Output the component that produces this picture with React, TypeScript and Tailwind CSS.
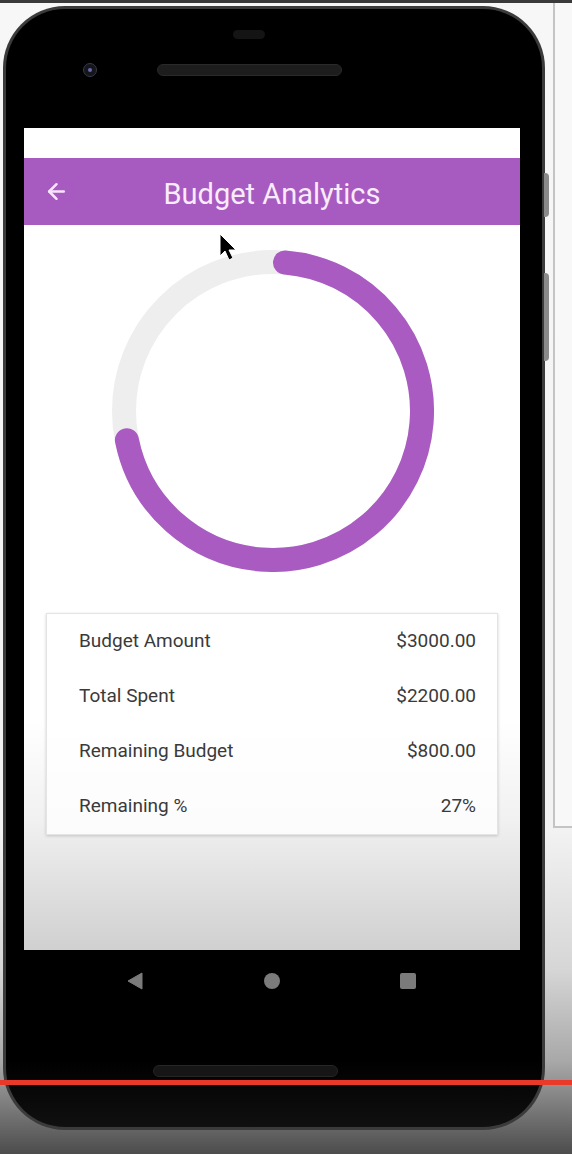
import { ArrowLeft } from "lucide-react";

const rows = [
  ["Budget Amount", "$3000.00"],
  ["Total Spent", "$2200.00"],
  ["Remaining Budget", "$800.00"],
  ["Remaining %", "27%"],
];

function Ring({ start, sweep }: { start: number; sweep: number }) {
  const r = 149; const c = 2 * Math.PI * r;
  return (
    <svg width="322" height="322" viewBox="0 0 322 322" className="block">
      <circle cx="161" cy="161" r={r} fill="none" stroke="#eeeeee" strokeWidth="24" />
      <circle cx="161" cy="161" r={r} fill="none" stroke="#a95bc1" strokeWidth="24" strokeLinecap="round"
        strokeDasharray={`${(c * sweep) / 360} ${c}`} transform={`rotate(${start - 90} 161 161)`} />
    </svg>
  );
}

export default function App() {
  return (
    <div className="relative w-[572px] h-[1154px] overflow-hidden bg-[linear-gradient(to_bottom,#f7f7f7_0%,#f2f2f2_72%,#d6d6d6_84%,#a8a8a8_92%,#4c4c4c_100%)] font-['Roboto',sans-serif]">
      <div className="h-[3px] bg-[#3a3a3a]" />
      <div className="flex">
        {/* phone */}
        <div className="relative ml-[3px] mt-[3px] w-[542px] h-[1124px] rounded-[62px] bg-[#3b3b3b] p-[3px]">
          <div className="w-full h-full rounded-[59px] bg-[linear-gradient(to_bottom,#000_0%,#000_94%,#101010_100%)] overflow-hidden">
            {/* top bezel */}
            <div className="h-[119px]">
              <div className="pt-[21px] pl-[227px]"><div className="w-[32px] h-[9px] rounded-full bg-[#141414]" /></div>
              <div className="mt-[24px] flex items-center">
                <div className="ml-[77px] w-[14px] h-[14px] rounded-full bg-[#15151d] border border-[#3a3a44] flex items-center justify-center">
                  <div className="w-[4px] h-[4px] rounded-full bg-[#6a6aa8]" />
                </div>
                <div className="ml-[60px] w-[185px] h-[12px] rounded-full bg-[#1d1d1d] border border-[#2a2a2a]" />
              </div>
            </div>
            {/* screen */}
            <div className="ml-[18px] w-[496px] h-[822px] flex flex-col bg-[linear-gradient(to_bottom,#ffffff_0%,#ffffff_72%,#f1f1f1_84%,#d0d0d0_100%)]">
              <div className="h-[30px]" />
              <div className="relative h-[67px] bg-[#a75bc0] flex items-center justify-center">
                <ArrowLeft className="absolute left-[20px] top-[21px] text-[#f7e6fa]" size={25} strokeWidth={2.4} />
                <span className="mt-[6px] text-[29px] text-[#f9ebfb]">Budget Analytics</span>
              </div>
              <div className="mt-[25px] flex justify-center pl-[2px]"><Ring start={4.6} sweep={254} /></div>
              <div className="mt-[41px] mx-[22px] bg-white/80 border border-[#e4e4e4] shadow-[0_1px_3px_rgba(0,0,0,0.18)]">
                {rows.map(([k, v]) => (
                  <div key={k} className="h-[55px] flex items-center justify-between pl-[32px] pr-[21px] text-[19px] text-[#3a3a3a]">
                    <span>{k}</span><span>{v}</span>
                  </div>
                ))}
              </div>
            </div>
            {/* nav bar */}
            <div className="pt-[22px] flex items-center">
              <svg width="16" height="18" viewBox="0 0 16 18" className="ml-[121px]"><path d="M15 1v16L1 9z" fill="#7b7b7b" stroke="#7b7b7b" strokeLinejoin="round" /></svg>
              <div className="ml-[121px] w-[16px] h-[16px] rounded-full bg-[#7b7b7b]" />
              <div className="ml-[120px] w-[16px] h-[16px] rounded-[2px] bg-[#7b7b7b]" />
            </div>
            <div className="mt-[75px] ml-[147px] w-[185px] h-[12px] rounded-full bg-[#161616] border border-[#262626]" />
          </div>
          <div className="absolute right-[-4px] top-[167px] w-[5px] h-[44px] rounded-r bg-[#8a8a8a]" />
          <div className="absolute right-[-4px] top-[267px] w-[5px] h-[88px] rounded-r bg-[#8a8a8a]" />
        </div>
        {/* side panel */}
        <div className="ml-[8px] flex-1 h-[825px] bg-[#f8f8f8] border-l-2 border-b-2 border-[#c4c4c4]" />
      </div>
      {/* video progress bar */}
      <div className="absolute left-0 right-0 top-[1080px] h-[5px] bg-[#e8392b]" />
      {/* cursor */}
      <svg className="absolute left-[219px] top-[233px]" width="20" height="30" viewBox="0 0 20 30">
        <path d="M1 1v22l5-5 4 9 4-2-4-8h7z" fill="#000" stroke="#fff" strokeWidth="1" />
      </svg>
    </div>
  );
}
